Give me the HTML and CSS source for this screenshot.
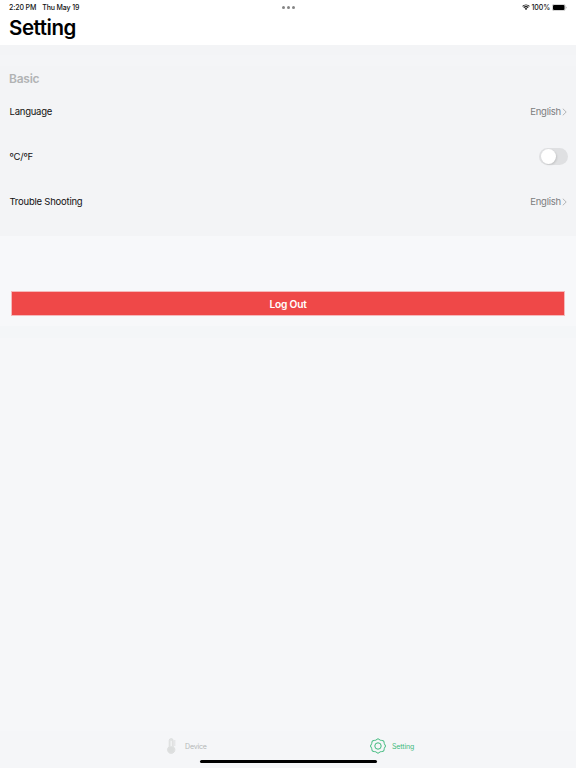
FILE: index.html
```html
<!DOCTYPE html>
<html lang="en">
<head>
    <meta charset="UTF-8">
    <title>Setting</title>
    <link rel="stylesheet" href="styles.css">
</head>
<body>
    <div class="screen">
        <header class="header">
            <div class="status">
                <div class="status__left"><span>2:20 PM</span><span>Thu May 19</span></div>
                <div class="status__dots"><i></i><i></i><i></i></div>
                <div class="status__right">
                    <svg class="wifi" viewBox="0 0 16 12">
                        <path d="M1.2 4.6a9.8 9.8 0 0 1 13.6 0M3.5 7.4a6.5 6.5 0 0 1 9 0" fill="none" stroke="#111" stroke-width="2.2"/>
                        <path d="M5.4 9.3a3.8 3.8 0 0 1 5.2 0L8 12z" fill="#111"/>
                    </svg>
                    <span>100%</span>
                    <svg class="battery" viewBox="0 0 15 7">
                        <rect x=".3" y=".3" width="12.9" height="6.4" rx="1.8" fill="none" stroke="#aaa" stroke-width=".6"/>
                        <rect x="1" y="1" width="11.5" height="5" rx="1.1" fill="#000"/>
                        <path d="M13.9 2.4v2.2q.8-.3.8-1.1t-.8-1.1z" fill="#aaa"/>
                    </svg>
                </div>
            </div>
            <h1 class="title">Setting</h1>
        </header>
        <section class="settings">
            <h2 class="settings__title">Basic</h2>
            <div class="row">
                <span>Language</span>
                <span class="row__value">English
                    <svg class="chevron" viewBox="0 0 5 8"><path d="M.8.7 4.2 4 .8 7.3"/></svg>
                </span>
            </div>
            <div class="row">
                <span>ºC/ºF</span>
                <span class="switch"></span>
            </div>
            <div class="row">
                <span>Trouble Shooting</span>
                <span class="row__value">English
                    <svg class="chevron" viewBox="0 0 5 8"><path d="M.8.7 4.2 4 .8 7.3"/></svg>
                </span>
            </div>
        </section>
        <div class="account">
            <button class="logout" type="button">Log Out</button>
        </div>
        <div class="spacer"></div>
        <nav class="tabs">
            <div class="tabs__items">
                <a class="tab tab--device">
                    <svg class="tab__thermo" viewBox="0 0 10 16">
                        <path d="M3.2 2.6a2 2 0 0 1 4 0v6a3.7 3.7 0 1 1-4 0z" fill="#e2e4e4" stroke="#dadcdc" stroke-width=".8"/>
                        <path d="M5.2 3v5" stroke="#f6f7f8" stroke-width="1"/>
                        <circle cx="5" cy="11.7" r="3" fill="#dcdede"/>
                        <path d="M8.8 2v6" stroke="#dfe1e1" stroke-width="1"/>
                    </svg>
                    <span>Device</span>
                </a>
                <a class="tab tab--active">
                    <svg class="tab__gear" viewBox="0 0 16 16">
                        <path d="M6 2Q8-.6 10 2q.7.5 1.5.4 3-.3 2.7 2.5 0 .7.3 1.1 2.1 2 0 4-.3.5-.3 1.2.3 2.7-2.7 2.4-.8-.1-1.5.4-2 2.6-4 0-.7-.5-1.5-.4-3 .3-2.7-2.4 0-.7-.3-1.2-2.1-2 0-4 .3-.4.3-1.1Q1.5 2.1 4.5 2.4 5.3 2.5 6 2z"/>
                        <circle cx="8" cy="8" r="3.2"/>
                    </svg>
                    <span>Setting</span>
                </a>
            </div>
            <div class="home-bar"></div>
        </nav>
    </div>
</body>
</html>
```
FILE: styles.css
```css
* {
    box-sizing: border-box;
}
html, body {
    padding: 0;
    margin: 0;
}
body {
    font-family: Inter, sans-serif;
    color: #111;
}
svg {
    display: block;
    flex: none;
}
.screen {
    display: flex;
    flex-direction: column;
    height: 100vh;
    background: #f6f7f9;
}
.header {
    height: 45px;
    background: #fff;
}
.status {
    display: grid;
    grid-template-columns: 1fr auto 1fr;
    align-items: center;
    height: 14px;
    padding: 0 9px;
    font-size: 7px;
    font-weight: 500;
}
.status__left {
    display: flex;
    gap: 6px;
    letter-spacing: -.12px;
}
.status__dots {
    display: flex;
    gap: 2px;
}
.status__dots i {
    width: 3px;
    height: 3px;
    border-radius: 50%;
    background: #858585;
}
.status__right {
    display: flex;
    justify-content: flex-end;
    align-items: center;
    gap: 2px;
    letter-spacing: -.1px;
}
.wifi {
    width: 8px;
    height: 6px;
}
.battery {
    width: 15px;
    height: 7px;
}
.title {
    margin: 0;
    padding-left: 9px;
    font-size: 20.5px;
    font-weight: 600;
    line-height: 27px;
    letter-spacing: -.45px;
    color: #000;
}
.settings {
    height: 191px;
    padding: 23px 9px 0;
    background: linear-gradient(#f3f4f6 10px, #f4f5f7 10px, #f4f5f7 21px, #f3f4f6 21px);
}
.settings__title {
    margin: 0;
    font-size: 12px;
    font-weight: 600;
    line-height: 21px;
    letter-spacing: -.25px;
    color: #b1b3b4;
}
.row {
    display: flex;
    justify-content: space-between;
    align-items: center;
    height: 45px;
    padding-left: .5px;
    font-size: 9.5px;
    letter-spacing: -.23px;
}
.row__value {
    display: flex;
    align-items: center;
    gap: 1px;
    color: #7b7c7e;
}
.chevron {
    width: 5px;
    height: 8px;
    fill: none;
    stroke: #b4b5b7;
    stroke-width: 1;
}
.switch {
    display: flex;
    width: 29px;
    height: 17px;
    margin-right: -1px;
    padding: 1px;
    border-radius: 9px;
    background: #dfe0e2;
}
.switch::before {
    content: "";
    width: 15px;
    height: 15px;
    margin-left: 1px;
    border-radius: 50%;
    background: #fff;
    box-shadow: 1px 1px 2px rgba(0, 0, 0, .12);
}
.account {
    height: 90px;
    padding: 55px 11px 0;
    background: #f7f8fa;
}
.logout {
    display: block;
    width: 100%;
    height: 25px;
    padding: 0;
    border: 1px solid #f5b9bb;
    background: #ef4848;
    font-family: inherit;
    font-size: 10.2px;
    font-weight: 600;
    letter-spacing: -.2px;
    color: #fff;
}
.spacer {
    flex: 1;
    border-top: 12px solid #f4f6f8;
}
.tabs {
    height: 37px;
    background: #f5f6f8;
}
.tabs__items {
    display: flex;
    height: 29px;
}
.tab {
    display: flex;
    align-items: center;
    font-size: 7px;
    letter-spacing: -.15px;
    color: #b4b6b7;
}
.tab span {
    padding-top: 1px;
}
.tab--device {
    width: 204px;
    margin-left: 166px;
    gap: 9px;
}
.tab--active {
    gap: 6px;
    color: #3fba7d;
}
.tab__thermo {
    width: 10px;
    height: 16px;
}
.tab__gear {
    width: 16px;
    height: 16px;
    fill: none;
    stroke: #3fba7d;
    stroke-width: 1;
}
.home-bar {
    width: 177px;
    height: 3px;
    margin: 0 auto;
    border-radius: 2px;
    background: #000;
}
```
